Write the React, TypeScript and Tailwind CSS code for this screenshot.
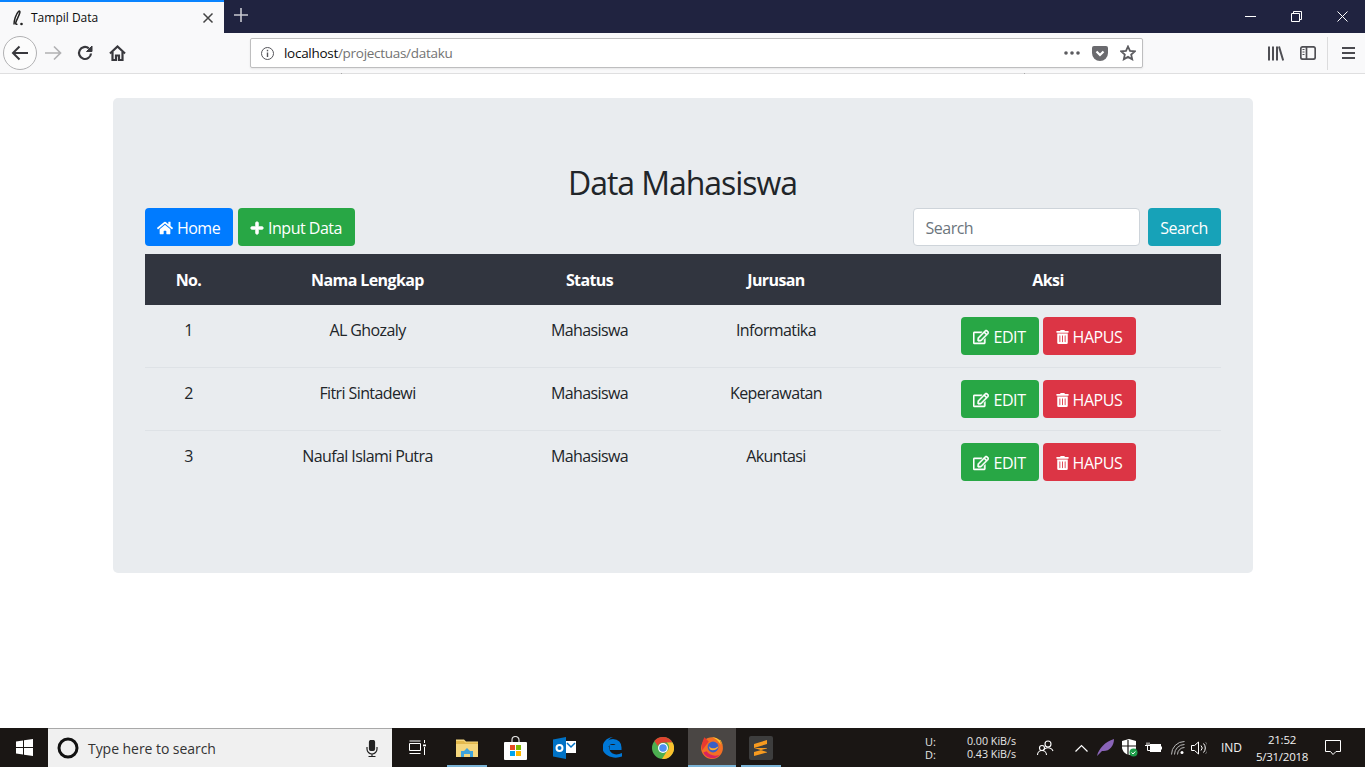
import React from "react";
import { FaHome, FaPlus, FaRegEdit, FaTrashAlt } from "react-icons/fa";

const rows = [
  ["1", "AL Ghozaly", "Mahasiswa", "Informatika"],
  ["2", "Fitri Sintadewi", "Mahasiswa", "Keperawatan"],
  ["3", "Naufal Islami Putra", "Mahasiswa", "Akuntasi"],
];

function TabBar() {
  return (
    <div className="flex h-[33px] bg-[#202340] items-stretch">
      <div className="w-[224px] bg-[#f9f9fa] border-t-2 border-[#0a84ff] flex items-center pl-[11px] pr-[10px]">
        <svg width="14" height="18" viewBox="0 0 14 18" className="shrink-0">
          <path d="M3 15.500C3 11 5 5 7.500 2.500c1-1 1.800-.2 1.300 1.300C8 7 5.500 11 4.800 13.500c-.4 1.500.5 2.300 1.700 1.500" fill="none" stroke="#222" strokeWidth="1.500" />
          <circle cx="10.500" cy="15" r="1.300" fill="#222" />
        </svg>
        <span className="ml-[6px] text-[12px] text-[#0c0c0d] flex-1 leading-none">Tampil Data</span>
        <svg width="12" height="12" viewBox="0 0 12 12"><path d="M1.500 1.500l9 9M10.500 1.500l-9 9" stroke="#444" strokeWidth="1.500" /></svg>
      </div>
      <div className="w-[34px] flex items-center justify-center pb-[3px]">
        <svg width="14" height="14" viewBox="0 0 14 14"><path d="M7 0v14M0 7h14" stroke="#c8c9d0" strokeWidth="1.600" /></svg>
      </div>
      <div className="flex-1" />
      <div className="w-[46px] flex items-center justify-center pb-[1px]">
        <svg width="11" height="11" viewBox="0 0 11 11"><path d="M0 5.500h11" stroke="#fff" strokeWidth="1" /></svg>
      </div>
      <div className="w-[46px] flex items-center justify-center">
        <svg width="11" height="11" viewBox="0 0 11 11" fill="none" stroke="#fff"><path d="M.5 2.500h8v8h-8zM2.500 2.500v-2h8v8h-2" /></svg>
      </div>
      <div className="w-[46px] flex items-center justify-center">
        <svg width="11" height="11" viewBox="0 0 11 11"><path d="M.5.500l10 10M10.500.500l-10 10" stroke="#fff" strokeWidth="1" /></svg>
      </div>
    </div>
  );
}

function ToolBar() {
  return (
    <div className="h-[41px] bg-[#f9f9fa] border-b border-[#dfdfe0] flex items-center relative">
      <div className="ml-[3px] w-[34px] h-[34px] rounded-full border border-[#b1b1b3] bg-[#fcfcfc] flex items-center justify-center">
        <svg width="18" height="16" viewBox="0 0 18 16" fill="none" stroke="#38383d" strokeWidth="2"><path d="M17 8H2M8.500 1.500L2 8l6.500 6.500" /></svg>
      </div>
      <div className="ml-[7px] w-[18px] flex justify-center">
        <svg width="17" height="16" viewBox="0 0 17 16" fill="none" stroke="#b1b1b3" strokeWidth="1.700"><path d="M0 8h15M9 1.500L15.500 8 9 14.500" /></svg>
      </div>
      <div className="ml-[14px] w-[18px] flex justify-center">
        <svg width="16" height="16" viewBox="0 0 16 16" fill="none" stroke="#38383d" strokeWidth="2.200"><path d="M14 8.500A6 6 0 1 1 11.800 3.300" /><path d="M15 1v5.500H9.500z" fill="#38383d" strokeWidth="1" /></svg>
      </div>
      <div className="ml-[14px] w-[18px] flex justify-center">
        <svg width="17" height="16" viewBox="0 0 17 16" fill="none" stroke="#38383d" strokeWidth="2.200"><path d="M1 8.500l7.500-7 7.500 7" /><path d="M3.500 7v8h3.500v-4.500h3V15h3.500V7" /></svg>
      </div>
      <div className="ml-[124px] w-[893px] h-[30px] bg-white border border-[#bebebf] rounded-[2px] flex items-center shadow-[0_1px_2px_rgba(0,0,0,0.08)]">
        <svg className="ml-[9px]" width="15" height="15" viewBox="0 0 15 15" fill="none" stroke="#55555a"><circle cx="7.500" cy="7.500" r="6" /><path d="M7.500 6.500v4.500" strokeWidth="1.400" /><path d="M7.500 3.800v1.500" strokeWidth="1.400" /></svg>
        <span className="ml-[9px] pt-[2px] text-[13.500px] tracking-[-0.29px] text-[#0c0c0d] flex-1 leading-none">localhost<span className="text-[#737373]">/projectuas/dataku</span></span>
        <svg width="16" height="4" viewBox="0 0 16 4" fill="#5b5b5f" className="mr-[12px]"><circle cx="2" cy="2" r="1.800" /><circle cx="8" cy="2" r="1.800" /><circle cx="14" cy="2" r="1.800" /></svg>
        <svg width="16" height="15" viewBox="0 0 16 15" className="mr-[12px]"><path d="M2 0h12a2 2 0 0 1 2 2v5a8 8 0 0 1-16 0V2a2 2 0 0 1 2-2z" fill="#6a6a6e" /><path d="M4.500 5.500L8 9l3.500-3.500" fill="none" stroke="#fff" strokeWidth="2.200" /></svg>
        <svg width="16" height="16" viewBox="0 0 16 16" className="mr-[6px]" fill="none" stroke="#5b5b5f" strokeWidth="1.800"><path d="M8 1.500l2 4.400 4.800.5-3.600 3.200 1 4.700L8 11.900l-4.200 2.400 1-4.700L1.200 6.400 6 5.900z" /></svg>
      </div>
      <div className="ml-[125px] w-[16px] flex justify-center">
        <svg width="16" height="15" viewBox="0 0 16 15" fill="none" stroke="#4f4f54" strokeWidth="2"><path d="M1 .500v14M5 .500v14M9 .500v14M11 .500l4.200 14" /></svg>
      </div>
      <div className="ml-[16px] w-[16px] flex justify-center">
        <svg width="16" height="14" viewBox="0 0 16 14" fill="none" stroke="#4f4f54" strokeWidth="1.700"><rect x=".800" y=".800" width="14.400" height="12.400" rx="2" /><path d="M6.500 1v12" /><path d="M2.500 3.500h2M2.500 6h2M2.500 8.500h2" strokeWidth="1" /></svg>
      </div>
      <div className="ml-[11px] w-px h-[33px] bg-[#dcdcdd]" />
      <div className="ml-[13px] w-[14px] flex justify-center">
        <svg width="13" height="12" viewBox="0 0 13 12" fill="none" stroke="#4a4a4f" strokeWidth="1.800"><path d="M0 1h13M0 6h13M0 11h13" /></svg>
      </div>
      <div className="absolute left-[341px] bottom-[-1px] w-px h-px bg-[#a8a8a8]" />
      <div className="absolute left-[1024px] bottom-[-1px] w-px h-px bg-[#a8a8a8]" />
    </div>
  );
}

function Taskbar() {
  return (
    <div className="h-[39px] bg-[#1a1614] flex items-stretch text-white">
      <div className="w-[48px] flex items-center justify-center">
        <svg width="17" height="17" viewBox="0 0 17 17" fill="#fff"><path d="M0 2.400L7 1.400V8H0zM8 1.200L17 0v8H8zM0 9h7v6.600l-7-1zM8 9h9v8l-9-1.200z" /></svg>
      </div>
      <div className="w-[344px] bg-[#f0f0f0] border-t border-[#a8a8a8] flex items-center">
        <svg width="22" height="22" viewBox="0 0 22 22" className="ml-[9px]" fill="none" stroke="#111" strokeWidth="3"><circle cx="11" cy="11" r="9" /></svg>
        <span className="ml-[9px] text-[14px] tracking-[-0.05px] text-[#333] flex-1">Type here to search</span>
        <svg width="12" height="17" viewBox="0 0 12 17" className="mr-[14px]" fill="none" stroke="#222" strokeWidth="1.200"><rect x="3.500" y=".500" width="5" height="10" rx="1.500" fill="#222" /><path d="M1 7v2a5 5 0 0 0 10 0V7M6 14v2.500M2.500 16.500h7" /></svg>
      </div>
      <div className="w-[50px] flex items-center justify-center">
        <svg width="17" height="15" viewBox="0 0 17 15" fill="none" stroke="#fff" strokeWidth="1"><path d="M.5 3.500h11v7H.5zM.5 1h11M.5 13.500h11M15.500 0v3M15.500 7v8" /><rect x="14" y="4.500" width="3" height="1.800" fill="#fff" stroke="none" /></svg>
      </div>
      <TaskIcon active>
        <svg width="22" height="20" viewBox="0 0 22 20"><path d="M0 1.500h8l2 2h12V19H0z" fill="#f5d77e" /><path d="M0 3h8l1 1.500h13V6H0z" fill="#e3b94d" /><path d="M5 19v-6h3l3-3 3 3h3v6h-3v-3H8v3z" fill="#3fa4dd" /></svg>
      </TaskIcon>
      <TaskIcon>
        <svg width="23" height="24" viewBox="0 0 23 24"><path d="M8 7V4a3.500 3.500 0 0 1 7 0v3" fill="none" stroke="#ddd" strokeWidth="1.200" /><rect y="6" width="23" height="18" rx="1" fill="#fff" /><rect x="6" y="9" width="5" height="5" fill="#e74c25" /><rect x="12" y="9" width="5" height="5" fill="#7fba00" /><rect x="6" y="15" width="5" height="5" fill="#00a4ef" /><rect x="12" y="15" width="5" height="5" fill="#ffb900" /></svg>
      </TaskIcon>
      <TaskIcon>
        <svg width="23" height="22" viewBox="0 0 23 22"><path d="M13 4h10v12H13z" fill="#fff" /><path d="M14 6l4 4 4-4" fill="none" stroke="#0072c6" strokeWidth="1.500" /><path d="M0 2.500L13 0v22L0 19.500z" fill="#0072c6" /><circle cx="6.500" cy="11" r="3" fill="none" stroke="#fff" strokeWidth="2" /></svg>
      </TaskIcon>
      <TaskIcon>
        <svg width="21" height="22" viewBox="0 0 21 22"><path d="M3 11c0-4 3.500-6.500 7-6.500 4 0 6 2.700 6 6H6.500" fill="none" stroke="#0078d7" strokeWidth="5" /><path d="M6 10c0 6 6 9.500 13 6v3.500C10 23-.5 18-.5 11 -.5 5 4 .5 10 0 5 2 3 6 3 10z" fill="#0078d7" /></svg>
      </TaskIcon>
      <TaskIcon>
        <svg width="22" height="22" viewBox="0 0 22 22"><circle cx="11" cy="11" r="11" fill="#4caf50" /><path d="M11 0a11 11 0 0 1 9.500 5.500H11a5.500 5.500 0 0 0-5.200 3.600L2.400 4A11 11 0 0 1 11 0z" fill="#e0432f" /><path d="M20.500 5.500A11 11 0 0 1 10 22l4.700-7.500a5.500 5.500 0 0 0 0-9z" fill="#fbc02d" /><circle cx="11" cy="11" r="5" fill="#fff" /><circle cx="11" cy="11" r="3.800" fill="#4f8ff0" /></svg>
      </TaskIcon>
      <div className="ml-[1px] w-[48px] bg-[#4a4644] border-b-2 border-[#7ab3d6] flex items-center justify-center">
        <svg width="24" height="24" viewBox="0 0 22 22"><circle cx="11" cy="12" r="10" fill="#f36f24" /><path d="M4 2c-2 4-3 8-2 12l6-8z" fill="#e8392f" /><path d="M11 2c5 0 10 4 10 10 0-3-1-6-3-8l1 5c-2-4-5-6-8-7z" fill="#ffcb2e" /><path d="M3 16c3 6 11 7 15 2-4 2-9 1-12-3z" fill="#d8245e" /><circle cx="12" cy="11" r="5" fill="#3a5fc5" /><path d="M8 10c2 3 6 3 9 0-1 4-6 5-8 3z" fill="#ffb02e" /></svg>
      </div>
      <TaskIcon active>
        <div className="w-[24px] h-[24px] rounded-[2px] bg-[#3d3d3d] flex items-center justify-center">
          <svg width="13" height="16" viewBox="0 0 13 16" fill="#f79a1f"><path d="M13 0v4L0 8V4zM0 8l13 4v-4zM13 8.500v4L0 16v-4z" /></svg>
        </div>
      </TaskIcon>
      <div className="flex-1" />
      <div className="w-[33px] text-[11px] leading-[13px] flex flex-col justify-center text-[#e6e6e6]"><span>U:</span><span>D:</span></div>
      <div className="w-[58px] text-[10.700px] leading-[13px] flex flex-col justify-center text-[#e6e6e6] items-end"><span>0.00 KiB/s</span><span>0.43 KiB/s</span></div>
      <div className="w-[59px] flex items-center justify-center">
        <svg width="17" height="16" viewBox="0 0 17 16" fill="none" stroke="#fff" strokeWidth="1.100"><circle cx="11" cy="4" r="3" /><path d="M6 11a5.500 5.500 0 0 1 10 0" /><circle cx="5" cy="8" r="2.500" /><path d="M.5 15a4.500 4.500 0 0 1 9 0" /></svg>
      </div>
      <div className="w-[14px] flex items-center justify-center ml-[-1px]">
        <svg width="13" height="8" viewBox="0 0 13 8" fill="none" stroke="#fff" strokeWidth="1.200"><path d="M.5 7.500l6-6 6 6" /></svg>
      </div>
      <div className="w-[34px] flex items-center justify-center">
        <svg width="17" height="17" viewBox="0 0 17 17"><path d="M0 17C2 9 8 3 17 0c0 7-5 13-12 12z" fill="#8a64b8" /></svg>
      </div>
      <div className="w-[16px] flex items-center justify-center">
        <svg width="16" height="18" viewBox="0 0 16 18"><path d="M7 0l7 2v6c0 4-3 7-7 8-4-1-7-4-7-8V2z" fill="#fff" /><path d="M6 1v15M0 7h14" stroke="#1a1614" strokeWidth="1.200" /><circle cx="11.500" cy="13.500" r="4" fill="#1e9e4a" /><path d="M9.500 13.500l1.500 1.500 2.300-2.500" fill="none" stroke="#fff" /></svg>
      </div>
      <div className="w-[30px] flex items-center justify-center">
        <svg width="17" height="12" viewBox="0 0 17 12" fill="none" stroke="#fff"><rect x="5.500" y="2.500" width="10" height="7" fill="#fff" /><path d="M16.500 4.500v3M0 3.500h5M2 .5v3M4 .5v3M2.500 3.500v5h3" /></svg>
      </div>
      <div className="w-[20px] flex items-center justify-center">
        <svg width="15" height="14" viewBox="0 0 15 14" fill="none" stroke="#bbb"><path d="M.5 13.500A13 13 0 0 1 13.500.5M3.500 13.500A10 10 0 0 1 13.500 3.500M6.500 13.500A7 7 0 0 1 13.500 6.500" /><circle cx="11" cy="11.500" r="1.500" fill="#fff" stroke="none" /></svg>
      </div>
      <div className="w-[22px] flex items-center justify-center">
        <svg width="16" height="14" viewBox="0 0 16 14" fill="none" stroke="#fff"><path d="M.5 4.500h3L7.500 1v12l-4-3.500h-3z" /><path d="M10 4.500a3.500 3.500 0 0 1 0 5M12.500 2.500a6.500 6.500 0 0 1 0 9" /><path d="M14.500 1a9 9 0 0 1 0 12" stroke="#666" /></svg>
      </div>
      <div className="w-[43px] text-[12px] flex items-center justify-center text-[#f2f2f2]">IND</div>
      <div className="w-[58px] text-[11.500px] leading-[17px] flex flex-col items-center justify-center text-[#f2f2f2] tracking-[-0.25px]"><span>21:52</span><span>5/31/2018</span></div>
      <div className="w-[54px] flex items-center justify-center pr-[10px]">
        <svg width="16" height="15" viewBox="0 0 16 15" fill="none" stroke="#fff"><path d="M.5.500h15v11h-4.500L8 14.500 5.500 11.500h-5z" /></svg>
      </div>
    </div>
  );
}

function TaskIcon({ children, active }: { children: React.ReactNode; active?: boolean }) {
  return (
    <div className="w-[49px] flex items-center justify-center relative">
      {children}
      {active && <div className="absolute bottom-0 left-[5px] right-[4px] h-[2px] bg-[#7ab3d6]" />}
    </div>
  );
}

export default function App() {
  return (
    <div className="h-[767px] flex flex-col overflow-hidden bg-white font-['Open_Sans','Noto_Sans',sans-serif]">
      <TabBar />
      <ToolBar />
      <main className="flex-1 pt-[24px] flex justify-center">
        <section className="w-[1140px] h-[475px] bg-[#e9ecef] rounded-[5px] px-[32px] pt-[66px] text-[#212529]">
          <h1 className="text-[32px] leading-[38px] text-center tracking-[-1.05px] mb-[6px]">Data Mahasiswa</h1>
          <div className="flex items-center h-[38px] text-[16px] tracking-[-0.5px] text-white">
            <a className="w-[88px] h-[38px] pt-[2px] bg-[#007bff] rounded-[4px] flex items-center justify-center gap-[4px]"><FaHome className="w-[16px] h-[16px] mt-[-1px]" />Home</a>
            <a className="ml-[5px] w-[117px] h-[38px] pt-[2px] bg-[#28a745] rounded-[4px] flex items-center justify-center gap-[4px]"><FaPlus className="w-[14px] h-[14px] mt-[-1px] stroke-[30px]" />Input Data</a>
            <div className="flex-1" />
            <div className="w-[227px] h-[38px] pt-[2px] bg-white border border-[#ced4da] rounded-[4px] pl-[12px] flex items-center text-[#6c757d]">Search</div>
            <a className="ml-[8px] w-[73px] h-[38px] pt-[2px] bg-[#17a2b8] rounded-[4px] flex items-center justify-center">Search</a>
          </div>
          <table className="mt-[8px] w-[1076px] table-fixed border-collapse text-[16px] tracking-[-0.6px]">
            <thead>
              <tr className="h-[51px] bg-[#31353f] text-white">
                <th className="w-[88px] font-bold">No.</th>
                <th className="w-[270px] font-bold">Nama Lengkap</th>
                <th className="w-[174px] font-bold">Status</th>
                <th className="w-[199px] font-bold">Jurusan</th>
                <th className="font-bold">Aksi</th>
              </tr>
            </thead>
            <tbody>
              {rows.map((r, i) => (
                <tr key={r[0]} className={i < 2 ? "border-b border-[#dee2e6]" : ""}>
                  {r.map((c) => (
                    <td key={c} className="pt-[13px] pb-[11px] text-center align-top leading-[24px]">{c}</td>
                  ))}
                  <td className="py-[12px]">
                    <div className="flex justify-center gap-[4px] text-white tracking-[-0.4px]">
                      <a className="w-[78px] h-[38px] pt-[2px] bg-[#28a745] rounded-[4px] flex items-center justify-center gap-[4px]"><FaRegEdit className="w-[16px] h-[16px] mt-[-1px] stroke-[15px]" />EDIT</a>
                      <a className="w-[93px] h-[38px] pt-[2px] bg-[#dc3545] rounded-[4px] flex items-center justify-center gap-[4px]"><FaTrashAlt className="w-[13px] h-[14px] mt-[-1px]" />HAPUS</a>
                    </div>
                  </td>
                </tr>
              ))}
            </tbody>
          </table>
        </section>
      </main>
      <Taskbar />
    </div>
  );
}
